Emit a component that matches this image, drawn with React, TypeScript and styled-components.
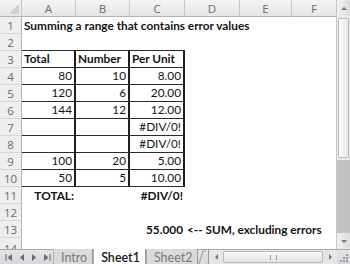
import React from "react";
import styled, { createGlobalStyle, css } from "styled-components";

const GlobalStyle = createGlobalStyle`
  html, body {
    margin: 0;
    padding: 0;
    background: #ffffff;
  }
  body {
    font-family: Lato, "Open Sans", sans-serif;
  }
`;

const COLS = ["A", "B", "C", "D", "E", "F"];
const COL_WIDTHS = [54, 54, 55, 55, 52, 45];

type Cell = {
  text?: string;
  bold?: boolean;
  align?: "left" | "right";
};

type Row = Cell[];

// rows 1..14, columns A..F
const rows: Row[] = [
  [{ text: "Summing a range that contains error values", bold: true }],
  [],
  [
    { text: "Total", bold: true },
    { text: "Number", bold: true },
    { text: "Per Unit", bold: true },
  ],
  [{ text: "80", align: "right" }, { text: "10", align: "right" }, { text: "8.00", align: "right" }],
  [{ text: "120", align: "right" }, { text: "6", align: "right" }, { text: "20.00", align: "right" }],
  [{ text: "144", align: "right" }, { text: "12", align: "right" }, { text: "12.00", align: "right" }],
  [{}, {}, { text: "#DIV/0!", align: "right" }],
  [{}, {}, { text: "#DIV/0!", align: "right" }],
  [{ text: "100", align: "right" }, { text: "20", align: "right" }, { text: "5.00", align: "right" }],
  [{ text: "50", align: "right" }, { text: "5", align: "right" }, { text: "10.00", align: "right" }],
  [{ text: "TOTAL:", bold: true, align: "right" }, {}, { text: "#DIV/0!", bold: true, align: "right" }],
  [],
  [{}, {}, { text: "55.000", bold: true, align: "right" }, { text: "<-- SUM, excluding errors", bold: true }],
  [],
];

const inTable = (r: number, c: number) => r >= 3 && r <= 10 && c <= 2;

const App: React.FC = () => {
  return (
    <>
      <GlobalStyle />
      <Window>
        <Main>
          <Sheet>
            <Corner>
              <CornerMark />
            </Corner>
            {COLS.map((c, i) => (
              <ColHeader key={c} style={{ width: COL_WIDTHS[i] }}>
                {c}
              </ColHeader>
            ))}
            {rows.map((row, ri) => {
              const r = ri + 1;
              return (
                <React.Fragment key={r}>
                  <RowHeader $last={r === 14}>{r}</RowHeader>
                  {COLS.map((c, ci) => {
                    const cell = row[ci] || {};
                    return (
                      <DataCell
                        key={c}
                        $table={inTable(r, ci)}
                        $topEdge={r === 3 && ci <= 2}
                        $align={cell.align || "left"}
                        $bold={!!cell.bold}
                      >
                        {cell.text}
                      </DataCell>
                    );
                  })}
                </React.Fragment>
              );
            })}
          </Sheet>
          <VScroll>
            <ScrollBtn>
              <Arrow $dir="up" />
            </ScrollBtn>
            <VThumb />
            <VTrack />
            <ScrollBtn>
              <Arrow $dir="down" />
            </ScrollBtn>
          </VScroll>
        </Main>
        <TabBar>
          <NavButtons>
            <NavIcon>
              <svg width="8" height="7" viewBox="0 0 8 7">
                <rect x="0.5" y="0" width="1" height="7" fill="#6a6a6a" />
                <path d="M7 0 L2.5 3.5 L7 7 Z" fill="#6a6a6a" />
              </svg>
            </NavIcon>
            <NavIcon>
              <svg width="6" height="7" viewBox="0 0 6 7">
                <path d="M5 0 L1 3.5 L5 7 Z" fill="#6a6a6a" />
              </svg>
            </NavIcon>
            <NavIcon>
              <svg width="6" height="7" viewBox="0 0 6 7">
                <path d="M1 0 L5 3.5 L1 7 Z" fill="#6a6a6a" />
              </svg>
            </NavIcon>
            <NavIcon>
              <svg width="8" height="7" viewBox="0 0 8 7">
                <path d="M1 0 L5.5 3.5 L1 7 Z" fill="#6a6a6a" />
                <rect x="6.5" y="0" width="1" height="7" fill="#6a6a6a" />
              </svg>
            </NavIcon>
          </NavButtons>
          <Tab>Intro</Tab>
          <Tab $active>Sheet1</Tab>
          <Tab>Sheet2</Tab>
          <NewTab>
            <svg width="9" height="14" viewBox="0 0 9 14">
              <path d="M1 14 L5 1 L8 1" stroke="#9a9a9a" fill="none" strokeWidth="1" />
            </svg>
          </NewTab>
          <HScroll>
            <HBtn>
              <Arrow $dir="left" />
            </HBtn>
            <HThumb>
              <HGrip />
            </HThumb>
            <HBtn>
              <Arrow $dir="right" />
            </HBtn>
          </HScroll>
          <Grip>
            <svg width="11" height="11" viewBox="0 0 11 11">
              {[
                [8, 2],
                [8, 5],
                [5, 5],
                [8, 8],
                [5, 8],
                [2, 8],
              ].map(([x, y]) => (
                <rect key={`${x}-${y}`} x={x} y={y} width="2" height="2" fill="#9a9a9a" />
              ))}
            </svg>
          </Grip>
        </TabBar>
      </Window>
    </>
  );
};

export default App;

const Window = styled.div`
  width: 350px;
  height: 264px;
  overflow: hidden;
  display: flex;
  flex-direction: column;
  background: #ffffff;
`;

const Main = styled.div`
  display: flex;
  height: 249px;
  overflow: hidden;
`;

const Sheet = styled.div`
  flex: 1;
  display: grid;
  grid-template-columns: 22px 54px 54px 55px 55px 52px 45px;
  grid-auto-rows: 17px;
  overflow: hidden;
  align-content: start;
`;

const headerBase = css`
  box-sizing: border-box;
  background: linear-gradient(#f4f4f4, #e6e6e6);
  color: #6b6b6b;
  font-family: "Open Sans", sans-serif;
  font-size: 11.5px;
  display: flex;
  align-items: center;
  justify-content: center;
`;

const Corner = styled.div`
  ${headerBase};
  position: relative;
  border-right: 1px solid #c6c6c6;
  border-bottom: 1px solid #b4b4b4;
`;

const CornerMark = styled.div`
  position: absolute;
  right: 2px;
  bottom: 2px;
  width: 0;
  height: 0;
  border-left: 10px solid transparent;
  border-bottom: 10px solid #d0d0d0;
`;

const ColHeader = styled.div`
  ${headerBase};
  border-right: 1px solid #c9c9c9;
  border-bottom: 1px solid #b4b4b4;
`;

const RowHeader = styled.div<{ $last?: boolean }>`
  ${headerBase};
  background: #eeeeee;
  border-right: 1px solid #b4b4b4;
  border-bottom: 1px solid #d6d6d6;
  ${(p) =>
    p.$last &&
    css`
      align-items: flex-end;
      line-height: 11px;
      padding-top: 2px;
    `}
`;

const DataCell = styled.div<{
  $table: boolean;
  $topEdge: boolean;
  $align: "left" | "right";
  $bold: boolean;
}>`
  box-sizing: border-box;
  position: relative;
  white-space: nowrap;
  overflow: visible;
  font-family: Lato, "Open Sans", sans-serif;
  font-size: 11.8px;
  font-weight: ${(p) => (p.$bold ? 700 : 400)};
  color: #141414;
  line-height: 16px;
  padding: 0 2px;
  display: flex;
  align-items: center;
  justify-content: ${(p) => (p.$align === "right" ? "flex-end" : "flex-start")};
  ${(p) =>
    p.$table &&
    css`
      border-right: 2px solid #1e1e1e;
      border-bottom: 1px solid #2a2a2a;
    `}
  ${(p) =>
    p.$topEdge &&
    css`
      border-top: 1px solid #2a2a2a;
      margin-top: -1px;
    `}
`;

const VScroll = styled.div`
  width: 13px;
  flex-shrink: 0;
  display: flex;
  flex-direction: column;
  background: #e9e9e9;
  border-left: 1px solid #c8c8c8;
`;

const ScrollBtn = styled.div`
  height: 16px;
  display: flex;
  align-items: center;
  justify-content: center;
  background: linear-gradient(90deg, #f2f2f2, #dcdcdc);
`;

const Arrow = styled.div<{ $dir: "up" | "down" | "left" | "right" }>`
  width: 0;
  height: 0;
  ${(p) =>
    p.$dir === "up"
      ? css`
          border-left: 3px solid transparent;
          border-right: 3px solid transparent;
          border-bottom: 3px solid #777;
        `
      : p.$dir === "down"
      ? css`
          border-left: 3px solid transparent;
          border-right: 3px solid transparent;
          border-top: 3px solid #777;
        `
      : p.$dir === "left"
      ? css`
          border-top: 3px solid transparent;
          border-bottom: 3px solid transparent;
          border-right: 3px solid #777;
        `
      : css`
          border-top: 3px solid transparent;
          border-bottom: 3px solid transparent;
          border-left: 3px solid #777;
        `}
`;

const VThumb = styled.div`
  height: 138px;
  margin: 2px 1px;
  border: 1px solid #b8b8b8;
  border-radius: 2px;
  background: linear-gradient(90deg, #fcfcfc, #e8e8e8);
`;

const VTrack = styled.div`
  flex: 1;
  background: #c2c2c2;
`;

const TabBar = styled.div`
  height: 15px;
  display: flex;
  align-items: stretch;
  background: linear-gradient(#e2e4e8, #d6d8dc);
  border-top: 1px solid #a8a8a8;
  box-sizing: border-box;
`;

const NavButtons = styled.div`
  display: flex;
  align-items: center;
  gap: 6px;
  padding: 0 4px 0 5px;
  width: 46px;
  box-sizing: border-box;
  margin-right: 7px;
`;

const NavIcon = styled.span`
  display: flex;
  align-items: center;
`;

const Tab = styled.div<{ $active?: boolean }>`
  display: flex;
  align-items: flex-end;
  padding: 0 5px 0 7px;
  font-family: Lato, "Open Sans", sans-serif;
  font-size: 12.5px;
  font-weight: ${(p) => (p.$active ? 600 : 400)};
  color: ${(p) => (p.$active ? "#1a1a1a" : "#7a7a7a")};
  background: ${(p) => (p.$active ? "#ffffff" : "#dadada")};
  border-right: 1px solid #9a9a9a;
  border-left: 1px solid #b0b0b0;
  margin-top: -1px;
  line-height: 13px;
`;

const NewTab = styled.div`
  width: 9px;
  display: flex;
  align-items: flex-end;
`;

const HScroll = styled.div`
  flex: 1;
  display: flex;
  align-items: stretch;
  background: #e6e6e6;
  border-left: 1px solid #999;
  margin-left: 1px;
`;

const HBtn = styled.div`
  width: 14px;
  display: flex;
  align-items: center;
  justify-content: center;
`;

const HThumb = styled.div`
  flex: 1;
  margin: 1px 0;
  border: 1px solid #b8b8b8;
  border-radius: 2px;
  background: linear-gradient(#fafafa, #e2e2e2);
  display: flex;
  align-items: center;
  justify-content: center;
`;

const HGrip = styled.div`
  width: 5px;
  height: 5px;
  border-left: 1px solid #999;
  border-right: 1px solid #999;
`;

const Grip = styled.div`
  width: 13px;
  display: flex;
  align-items: center;
  justify-content: center;
`;
